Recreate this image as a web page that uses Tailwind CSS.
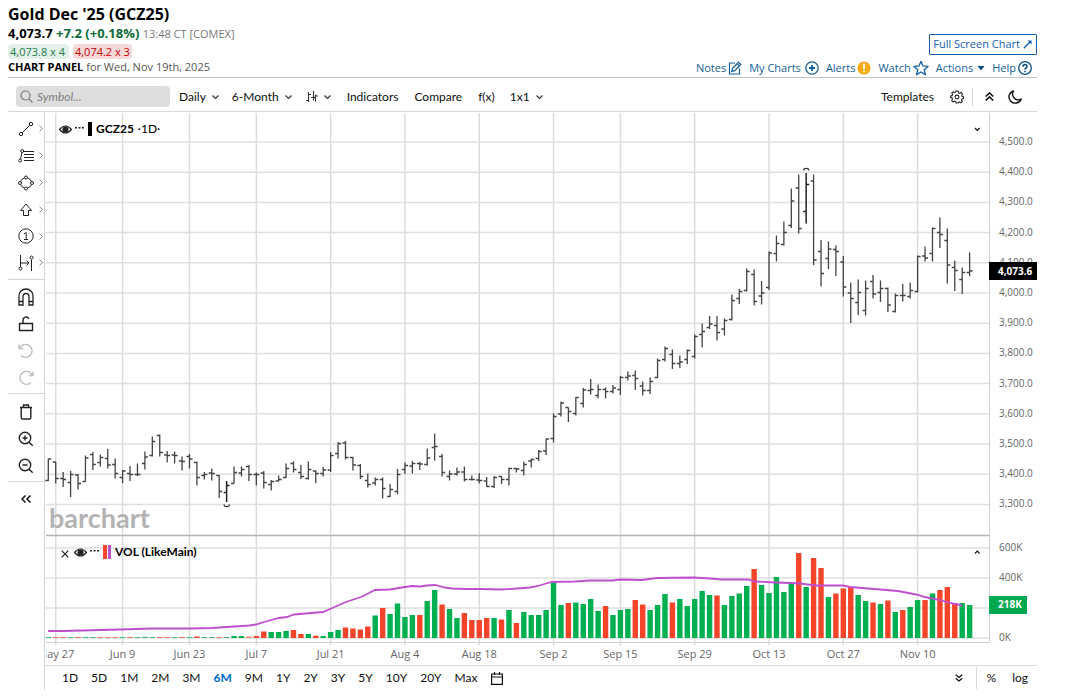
<!DOCTYPE html>
<html lang="en">
<head>
    <meta charset="UTF-8">
    <meta name="viewport" content="width=device-width, initial-scale=1.0">
    <title>Gold Dec '25 (GCZ25) - Interactive Chart</title>
    <script src="https://cdn.jsdelivr.net/npm/@tailwindcss/browser@4"></script>
</head>
<body class="bg-white text-black font-['Open_Sans',sans-serif]">
    <div class="pl-2 pr-[41px]">
        <!-- Header -->
        <header class="flex justify-between border-b border-[#c4c4c4] h-[78px]">
            <div class="pt-1">
                <h1 class="text-[16px] leading-[20px] font-bold">Gold Dec '25 (GCZ25)</h1>
                <p class="text-[13px] leading-[18px] font-bold">4,073.7 <span class="text-[#0d6b3c]">+7.2 (+0.18%)</span> <span class="text-[11px] font-normal text-[#777]">13:48 CT [COMEX]</span></p>
                <p class="flex gap-1 text-[11px] leading-[15px] mt-px">
                    <span class="bg-[#e3f0ea] text-[#1e7b4b] rounded-sm pl-0.5 pr-1">4,073.8 x 4</span>
                    <span class="bg-[#f6dada] text-[#c40000] rounded-sm px-0.5">4,074.2 x 3</span>
                </p>
                <p class="text-[11px] leading-[16px] text-[#555]"><b class="text-black">CHART PANEL</b> for Wed, Nov 19th, 2025</p>
            </div>
            <div class="flex flex-col items-end pt-[34px] text-[11px] text-[#145f99]">
                <button class="flex items-center gap-0.5 h-[21px] border border-[#1560b0] px-[3px] rounded-[1px] text-[#1560b0]">Full Screen Chart
                    <svg class="w-[11px] h-[11px]" viewBox="0 0 12 12" fill="none" stroke="currentColor" stroke-width="1.6"><path d="M2 10 9 3"/><path d="M6 1.500h4.500v4.500z" fill="currentColor" stroke="none"/></svg>
                </button>
                <nav class="flex items-center gap-[7px] h-[26px] shrink-0 -mb-1 pr-[5px]">
                    <a href="#" class="flex items-center gap-0.5">Notes
                        <svg class="w-[14px] h-[14px]" viewBox="0 0 14 14" fill="none" stroke="currentColor" stroke-width="1.2"><path d="M7 2H1.500v11h10V7.500M4.500 7.500l6-6.300 2.300 2.200-6 6.200-3 .9zM9.200 2.800l2.200 2.100"/></svg></a>
                    <a href="#" class="flex items-center gap-1">My Charts
                        <svg class="w-[14px] h-[14px]" viewBox="0 0 14 14" fill="none" stroke="currentColor" stroke-width="1.300"><circle cx="7" cy="7" r="6.200"/><path d="M7 4v6M4 7h6" stroke-width="1.800"/></svg></a>
                    <a href="#" class="flex items-center gap-0.5">Alerts
                        <svg class="w-[14px] h-[14px]" viewBox="0 0 14 14"><circle cx="7" cy="7" r="6.600" fill="#fbab18"/><path d="M7 2.500v5.800M7 9.600v2" stroke="#fff" stroke-width="1.700"/></svg></a>
                    <a href="#" class="flex items-center gap-0.5">Watch
                        <svg class="w-4 h-4" viewBox="0 0 16 16" fill="none" stroke="currentColor" stroke-width="1.300" stroke-linejoin="round"><path d="M8 1.300l2 4.600 5 .5-3.800 3.300 1.200 4.900L8 12l-4.400 2.600 1.200-4.900L1 6.400l5-.5z"/></svg></a>
                    <button class="flex items-center gap-1">Actions
                        <svg class="w-2 h-2" viewBox="0 0 8 8"><path d="M.5 2h7L4 6.500z" fill="#0b4f86"/></svg></button>
                    <a href="#" class="flex items-center gap-0.5">Help
                        <svg class="w-[14px] h-[14px]" viewBox="0 0 14 14" fill="none" stroke="#0b4f86" stroke-width="1.300"><circle cx="7" cy="7" r="6.300"/><path d="M5 5.700C5 3 9 3 9 5.500 9 7 7 7 7 8.600M7 9.800v1.500" stroke-width="1.600"/></svg></a>
                </nav>
            </div>
        </header>

        <!-- Top toolbar -->
        <div class="flex items-center h-[34px] pt-1 pl-2 border-b border-[#d9d9d9] font-['Lato',sans-serif] text-[12px] text-[#111]">
            <label class="flex items-center gap-1 w-[154px] h-[21px] mr-[9px] pl-1 rounded bg-[#dedede]">
                <svg class="w-[13px] h-[13px] shrink-0" viewBox="0 0 13 13" fill="none" stroke="#777" stroke-width="1.200"><circle cx="5.500" cy="5.500" r="4.500"/><path d="M8.800 8.800 12.500 12.500"/></svg>
                <input type="text" aria-label="Symbol" placeholder="Symbol..." class="w-full min-w-0 bg-transparent italic outline-none placeholder:text-[#808080]">
            </label>
            <button class="flex items-center gap-1.5 mr-[13px]">Daily <svg class="w-[7px] h-[7px]" viewBox="0 0 7 7" fill="none" stroke="#333" stroke-width="1.200"><path d="M.5 2.500l3 3 3-3"/></svg></button>
            <button class="flex items-center gap-1.5 mr-[13px]">6-Month <svg class="w-[7px] h-[7px]" viewBox="0 0 7 7" fill="none" stroke="#333" stroke-width="1.200"><path d="M.5 2.500l3 3 3-3"/></svg></button>
            <button aria-label="Bar type" class="flex items-center gap-1.5 mr-4"><svg class="w-[13px] h-3" viewBox="0 0 13 12" fill="none" stroke="#333" stroke-width="1.100"><path d="M3.500 1v10M1 9.500h2.500M3.500 3.500H6M8.500 0v9.500M6 6.500h5M10.500 3.500v7M10.500 5H13"/></svg> <svg class="w-[7px] h-[7px]" viewBox="0 0 7 7" fill="none" stroke="#333" stroke-width="1.200"><path d="M.5 2.500l3 3 3-3"/></svg></button>
            <button class="mr-4">Indicators</button>
            <button class="mr-4">Compare</button>
            <button class="mr-[15px]">f(x)</button>
            <button class="flex items-center gap-1.5">1x1 <svg class="w-[7px] h-[7px]" viewBox="0 0 7 7" fill="none" stroke="#333" stroke-width="1.200"><path d="M.5 2.500l3 3 3-3"/></svg></button>
            <button class="ml-auto mr-4">Templates</button>
            <button aria-label="Settings"><svg class="w-[14px] h-[14px]" viewBox="0 0 14 14" fill="none" stroke="#222" stroke-width="1.100" stroke-linejoin="round"><path d="M5.900 1h2.200l.4 1.700 1.100.5 1.500-.9 1.500 1.500-.9 1.500.5 1.100 1.300.3v1.700l-1.500.5-.5 1.100.9 1.500-1.500 1.300-1.500-.7-1.100.5L7.900 13H6.100l-.5-1.400-1.100-.5-1.500.8-1.300-1.400.8-1.500L2 7.900.6 7.500V6l1.500-.4.5-1.100-.8-1.500 1.400-1.200 1.300.8 1.100-.5z"/><circle cx="7" cy="7" r="1.900"/></svg></button>
            <span class="h-[18px] border-l border-[#d4d4d4] ml-2 mr-3"></span>
            <button aria-label="Collapse" class="mr-[14px]"><svg class="w-[9px] h-[9px]" viewBox="0 0 9 9" fill="none" stroke="#111" stroke-width="1.500"><path d="M.7 4.500 4.500.9l3.800 3.600M.7 8.500l3.800-3.600 3.800 3.600"/></svg></button>
            <button aria-label="Dark mode" class="mr-[15px]"><svg class="w-[14px] h-[14px]" viewBox="0 0 14 14" fill="none" stroke="#111" stroke-width="1.400" stroke-linejoin="round"><path d="M5.500.8A6.300 6.300 0 1 0 13.200 9 5.800 5.800 0 0 1 5.500.8z"/></svg></button>
        </div>

        <div class="flex">
            <!-- Drawing tools -->
            <aside class="w-[37px] shrink-0 border-r border-[#d4d4d4] text-[#222]">
                <div class="flex flex-col pt-[3px] pb-[3px] border-b border-[#d4d4d4]">
                    <button aria-label="Line" class="flex items-center h-[27px] pl-[10px] gap-[5px]"><svg class="w-4 h-4" viewBox="0 0 16 16" fill="none" stroke="currentColor"><circle cx="3" cy="13" r="1.700"/><circle cx="13" cy="3" r="1.700"/><path d="M4.200 11.800l7.600-7.600"/></svg><svg class="w-1 h-[7px]" viewBox="0 0 4 7" fill="none" stroke="#888"><path d="M.5.5l3 3-3 3"/></svg></button>
                    <button aria-label="Fibonacci" class="flex items-center h-[27px] pl-[10px] gap-[5px]"><svg class="w-4 h-4" viewBox="0 0 16 16" fill="none" stroke="currentColor"><circle cx="2.200" cy="12.500" r="1.500"/><circle cx="4.200" cy="3" r="1.500"/><path d="M2.500 11 4 4.500M5.700 3.500H16M6 6.500h10M6 9.500h10M6 12.500h10"/></svg><svg class="w-1 h-[7px]" viewBox="0 0 4 7" fill="none" stroke="#888"><path d="M.5.5l3 3-3 3"/></svg></button>
                    <button aria-label="Shapes" class="flex items-center h-[27px] pl-[10px] gap-[5px]"><svg class="w-4 h-4" viewBox="0 0 16 16" fill="none" stroke="currentColor"><circle cx="8" cy="2.500" r="1.500"/><circle cx="8" cy="13.500" r="1.500"/><circle cx="2" cy="8" r="1.500"/><circle cx="14" cy="8" r="1.500"/><path d="M6.500 2.800Q3.500 3.800 2.600 6.600M9.500 2.800q3 1 3.900 3.800M2.600 9.400q.9 2.800 3.900 3.800M13.400 9.400q-.9 2.800-3.900 3.800"/></svg><svg class="w-1 h-[7px]" viewBox="0 0 4 7" fill="none" stroke="#888"><path d="M.5.5l3 3-3 3"/></svg></button>
                    <button aria-label="Arrow" class="flex items-center h-[27px] pl-[10px] gap-[5px]"><svg class="w-4 h-4" viewBox="0 0 16 16" fill="none" stroke="currentColor"><path d="M8 2 13.500 8.500h-3v5h-5v-5h-3z"/></svg><svg class="w-1 h-[7px]" viewBox="0 0 4 7" fill="none" stroke="#888"><path d="M.5.5l3 3-3 3"/></svg></button>
                    <button aria-label="Counter" class="flex items-center h-[26px] pl-[10px] gap-[5px]"><svg class="w-4 h-4" viewBox="0 0 16 16" fill="none" stroke="currentColor"><circle cx="8" cy="8" r="7.200"/><path d="M5.800 6 8.200 4.500v7M6 11.500h4.200"/></svg><svg class="w-1 h-[7px]" viewBox="0 0 4 7" fill="none" stroke="#888"><path d="M.5.5l3 3-3 3"/></svg></button>
                    <button aria-label="Measure" class="flex items-center h-[27px] pl-[10px] gap-[5px]"><svg class="w-4 h-4" viewBox="0 0 16 16" fill="none" stroke="currentColor"><path d="M2.500 0v12M13.500 4.500v11.500M3 8h8M8.500 5.500 11 8l-2.500 2.500"/><circle cx="2.500" cy="13.500" r="1.500"/><circle cx="13.500" cy="2.500" r="1.500"/></svg><svg class="w-1 h-[7px]" viewBox="0 0 4 7" fill="none" stroke="#888"><path d="M.5.5l3 3-3 3"/></svg></button>
                </div>
                <div class="flex flex-col pt-[3px] pb-0.5 border-b border-[#d4d4d4]">
                    <button aria-label="Magnet" class="h-[27px] pl-[10px]"><svg class="w-4 h-[18px]" viewBox="0 0 16 18" fill="none" stroke="currentColor" stroke-width="1.300"><path d="M1 17V8a7 7 0 0 1 14 0v9h-4V8.500a3 3 0 0 0-6 0V17zM1 13.500h4M11 13.500h4"/></svg></button>
                    <button aria-label="Unlock" class="h-[27px] pl-[10px]"><svg class="w-4 h-4" viewBox="0 0 16 16" fill="none" stroke="currentColor" stroke-width="1.400"><path d="M1.500 7.500h13v7h-13zM5 7.500V4a3 3 0 0 1 5.800-1"/></svg></button>
                    <button aria-label="Undo" class="h-[27px] pl-[10px] text-[#bbb]"><svg class="w-4 h-4" viewBox="0 0 16 16" fill="none" stroke="currentColor" stroke-width="1.300"><path d="M1 1.500v4h4M1.500 5.300A6.500 6.500 0 1 1 3 12.500"/></svg></button>
                    <button aria-label="Redo" class="h-[27px] pl-[10px] text-[#bbb]"><svg class="w-4 h-4" viewBox="0 0 16 16" fill="none" stroke="currentColor" stroke-width="1.300"><path d="M15 1.500v4h-4M14.500 5.300A6.500 6.500 0 1 0 13 12.500"/></svg></button>
                </div>
                <div class="flex flex-col pt-1 pb-0.5 border-b border-[#d4d4d4]">
                    <button aria-label="Delete" class="h-[27px] pl-[10px]"><svg class="w-4 h-4" viewBox="0 0 16 16" fill="none" stroke="currentColor" stroke-width="1.400"><path d="M2 3.500h12M5.500 3V1h5v2M3.200 3.500v10.200q0 1.300 1.300 1.300h7q1.300 0 1.300-1.300V3.500"/></svg></button>
                    <button aria-label="Zoom in" class="h-[27px] pl-[10px]"><svg class="w-4 h-4" viewBox="0 0 16 16" fill="none" stroke="currentColor" stroke-width="1.400"><circle cx="7" cy="7" r="5.700"/><path d="M11.200 11.200l3.500 3.500M7 4.500v5M4.500 7h5"/></svg></button>
                    <button aria-label="Zoom out" class="h-[27px] pl-[10px]"><svg class="w-4 h-4" viewBox="0 0 16 16" fill="none" stroke="currentColor" stroke-width="1.400"><circle cx="7" cy="7" r="5.700"/><path d="M11.200 11.200l3.500 3.500M4.500 7h5"/></svg></button>
                </div>
                <button aria-label="Hide tools" class="h-[27px] pl-[13px] mt-[3px]"><svg class="w-[10px] h-2" viewBox="0 0 10 8" fill="none" stroke="#111" stroke-width="1.500"><path d="M4.500.5 1 4l3.500 3.500M9.500.5 6 4l3.500 3.500"/></svg></button>
            </aside>

            <main class="flex-1 min-w-0">
                <div class="relative">
                    <svg id="chart" class="block w-full" viewBox="45 112 992 553" font-family="'Open Sans', sans-serif" font-size="10"></svg>

                    <!-- Price legend -->
                    <div class="absolute left-[14px] top-[9px] flex items-center font-['Lato',sans-serif] text-[12px] leading-4">
                        <svg class="w-[13px] h-[9px]" viewBox="0 0 13 9" fill="none" stroke="#222" stroke-width="1.200"><path d="M.5 4.500Q6.500-2.500 12.500 4.500 6.500 11.500.5 4.500z"/><circle cx="6.500" cy="4.500" r="2.500" fill="#222"/></svg>
                        <svg class="w-[9px] h-[5px] ml-[3px] mb-1" viewBox="0 0 9 5" fill="#222"><path d="M0 2h2v1.500H0zM3.500 2h2v1.500h-2zM7 2h2v1.500H7z"/></svg>
                        <span class="w-1 h-[14px] ml-1 mr-1 bg-black"></span>
                        <b>GCZ25</b><span class="ml-1">·1D·</span>
                    </div>
                    <!-- Volume legend -->
                    <div class="absolute left-[16px] top-[432px] flex items-center font-['Lato',sans-serif] text-[12px] leading-4">
                        <svg class="w-2 h-2 mt-1" viewBox="0 0 8 8" fill="none" stroke="#222" stroke-width="1.200"><path d="M.7.7l6.600 6.600M7.300.7.7 7.300"/></svg>
                        <svg class="w-[13px] h-[9px] ml-[5px]" viewBox="0 0 13 9" fill="none" stroke="#222" stroke-width="1.200"><path d="M.5 4.500Q6.500-2.500 12.500 4.500 6.500 11.500.5 4.500z"/><circle cx="6.500" cy="4.500" r="2.500" fill="#222"/></svg>
                        <svg class="w-[9px] h-[5px] ml-[3px] mb-1" viewBox="0 0 9 5" fill="#222"><path d="M0 2h2v1.500H0zM3.500 2h2v1.500h-2zM7 2h2v1.500H7z"/></svg>
                        <span class="w-1 h-[14px] ml-1 bg-[#f4452b]"></span><span class="w-[3px] h-[14px] ml-px mr-1 bg-[#c04fd0]"></span>
                        <b>VOL (LikeMain)</b>
                    </div>
                </div>

                <!-- Range toolbar -->
                <div class="flex items-center h-[25px] border-t border-[#d9d9d9] pl-[17px] font-['Lato',sans-serif] text-[12px] text-[#111]">
                    <div class="flex gap-[13px]">
                        <button>1D</button><button>5D</button><button>1M</button><button>2M</button><button>3M</button>
                        <button class="font-bold text-[#006ac1]">6M</button><button>9M</button><button>1Y</button><button>2Y</button>
                        <button>3Y</button><button>5Y</button><button>10Y</button><button>20Y</button><button>Max</button>
                        <button aria-label="Pick dates"><svg class="w-3 h-[13px]" viewBox="0 0 12 13" fill="none" stroke="#111" stroke-width="1.200"><path d="M.6 2h10.800v10.400H.6zM.6 5h10.800M3.500 0v3M8.500 0v3"/></svg></button>
                    </div>
                    <button aria-label="Expand" class="ml-auto mr-[13px]"><svg class="w-2 h-2" viewBox="0 0 8 8" fill="none" stroke="#111" stroke-width="1.200"><path d="M.7.7 4 3.500 7.300.7M.7 4.200 4 7l3.300-2.800"/></svg></button>
                    <span class="h-[22px] border-l border-[#d9d9d9] mr-[10px]"></span>
                    <button class="mr-4">%</button>
                    <button class="mr-[9px]">log</button>
                </div>
            </main>
        </div>
    </div>

    <script>
        const X0 = 48.3, STEP = 7.43, VOL_BASE = 638;

        // open, high, low, close in chart units
        const bars = [
            [480.5,458.5,481,459],[462,462,483.5,478.5],[478.5,472,487,479.5],[482.5,471,497,474.5],[475,474,489.5,483.5],
            [481.5,455.5,481.5,458],[454.5,452,470,464.5],[462.5,454.5,466.5,457.5],[458.5,449,468.5,465],[464.5,458.5,478.5,473.5],
            [477.5,470,483,471],[473.5,466,481,474.5],[474.5,463.5,476,474.5],[463.5,451.5,469.5,457],[455.5,436.5,456.5,441.5],
            [435.5,434.5,456.5,452.5],[455,451,462.5,455.5],[455,451.5,463.5,455.5],[461,456.5,470.5,461.5],[456.5,454,468.5,459],
            [462.5,461.5,485.5,477.5],[475.5,472,479.5,474.5],[473,468.5,480.5,473.5],[475.5,475,498,491.5],[492.5,481,502,485.5],
            [483.5,466.5,483.5,472.5],[473,466.5,476.5,469.5],[466.5,465,481,474.5],[474.5,472.5,485.5,474.5],[473,471,488.5,482.5],
            [484.5,480,490.5,481.5],[481,475.5,481.5,479.5],[477.5,463.5,478,468.5],[463.5,461.5,472.5,469.5],[472.5,465,479,476.5],
            [478.5,461.5,479.5,469.5],[471,470.5,483,473.5],[473.5,467,476.5,470],[470,452,472,455.5],[453.5,442,458.5,443.5],
            [443,441,459.5,457.5],[457.5,457,470.5,465],[465.5,464,479,476.5],[480.5,473.5,487.5,484.5],[483,477.5,485.5,479.5],
            [479.5,477.5,498.5,488.5],[496.5,484,497,489.5],[491.5,469,494.5,474.5],[469.5,462.5,474,465.5],[466,461,473.5,463.5],
            [463.5,462,470,464],[464.5,448.5,465.5,458],[447.5,433.5,460.5,446.5],[456.5,454,476.5,472.5],[476.5,470.5,480.5,474],
            [474,467.5,475.5,472],[472,466.5,481.5,479.5],[479.5,475.5,480.5,479.5],[480,473,483.5,480.5],[481,477,487,486.5],
            [486.5,476,488,477.5],[476.5,476,484,479.5],[479.5,467.5,485.5,468.5],[468.5,468,472.5,469],[470.5,461.5,475.5,464.5],
            [461,458.5,467.5,459.5],[458.5,450,461,451.5],[451,438.5,455,439],[438.5,413.5,442.5,416.5],[414,401.5,416.5,403],
            [407.5,407.5,422,411.5],[413.5,397,415.5,397.5],[403.5,388,407.5,390],[390.5,379,394.5,389.5],[395.5,384.5,398.5,389.5],
            [389.5,387.5,398.5,391.5],[391.5,385,393.5,388],[389.5,376,395,377.5],[377.5,371.5,380.5,376],[375.5,370.5,390,378.5],
            [386,381.5,395.5,390.5],[390.5,377.5,394,381.5],[377.5,358.5,378,360.5],[359.5,346.5,361.5,348.5],[354.5,349.5,369,363.5],
            [363.5,355.5,368,362],[359.5,349.5,364,350.5],[356.5,334.5,358.5,336.5],[334.5,323.5,347.5,331.5],[327.5,316,329,324],
            [325.5,316,340.5,332.5],[329,318.5,335.5,320.5],[319.5,294.5,320.5,300.5],[298.5,289,304,291.5],[290.5,268.5,291.5,271.5],
            [274.5,269.5,305.5,301.5],[296,281,304.5,293],[287.5,251.5,290,253],[253.5,235.5,261.5,243.5],[244.5,221.5,245.5,232.5],
            [225.5,188.5,228,201],[188,174.5,233.5,228.5],[211.5,173,223.5,184.5],[181,174.5,265,260],[251.5,240,286.5,273.5],
            [258.5,241.5,269,249],[249.5,245.5,276,251.5],[262,256,296.5,287],[293,282.5,323,298.5],[302.5,279.5,315,292.5],
            [310.5,280.5,315.5,288.5],[281.5,275,298.5,294],[292.5,280.5,302,288.5],[288.5,287.5,312,305],[311.5,293.5,312.5,295.5],
            [295.5,284,301.5,295.5],[296.5,282.5,298.5,290.5],[291.5,255.5,292.5,256.5],[256,246.5,261.5,258],[253.5,227.5,261.5,228.5],
            [232.5,217.5,248,234.5],[240.5,228.5,283.5,265],[267.5,260.5,291,270.5],[279.5,267.5,294,272.5],[272.5,252.5,276,271]
        ];

        // volume bar heights, r = down day, g = up day
        const volume = `g1 r1 r1 g1 r1 g1 g1 r1 r1 r1 g1 r1 g1 g1.3 g1 r1 r1 g1 r1 g1 r1.5 g1 g1 r1 g1 g2 g2 r1.300 r2 r6.5 g6 g6 g7 r8 r4 g4 r2.3 g2 g6 g8
            r10.5 r9.5 r8.5 r11.5 g22.5 r30 g24 g34.5 g21 g23 r23 g37 g48 r33.5 g29 g20 r25 r18 r18 r20 g20 r18.5 g28 r15 g26 g23 g23 g28 g56 g33
            r35 g35.5 g34 g39 g27 r32 g23 g28 g29 r38 r33.5 g28 g33 g44 r35.5 g39 g32 g39 g47 g43 r42.5 g33 g42 g44.5 g52 r69 g53 g45 g61 g46
            g55 r85 g51 r80 r70 g41 r44.5 r49.5 r51 g43 g37 r35.5 g34 r37.5 g26 r28 g31 g38 r38 g44.5 r48 r51 r35 g35 g33`.trim().split(/\s+/);

        const average = '48,631 63,631 120,629.5 152,628.5 190,628.5 212,628 227,627 249,625.5 256,624.5 264,622 279,618 287,617 294,614.5 323,612 330,609 346,602 361,597 368,593.5 375,590 390,589.5 405,587 412,586 420,586.5 427,585.5 435,585 445,587.5 452,588.5 465,589 480,589 502,589.5 517,588.5 530,587.5 538,586 546,583.5 552,582 575,581.5 590,580.5 613,580.5 620,579.5 642,580 657,578 694,577.5 710,578.5 722,579.5 748,579.5 755,581.5 775,582.5 791,583 800,583.5 816,585.5 843,585.5 850,587 880,589.5 898,591 916,594.5 925,597 940,600 950,603 962,605.5';

        const dates = [['May 27', 1], ['Jun 9', 10], ['Jun 23', 19], ['Jul 7', 28], ['Jul 21', 38], ['Aug 4', 48], ['Aug 18', 58],
            ['Sep 2', 68], ['Sep 15', 77], ['Sep 29', 87], ['Oct 13', 97], ['Oct 27', 107], ['Nov 10', 117]];

        const x = i => X0 + i * STEP;
        let out = '<defs><clipPath id="plot"><rect x="46" y="112" width="944" height="560"/></clipPath></defs>';

        // grid and axes
        dates.forEach(([label, i]) => {
            out += `<path d="M${x(i)} 113V645.500" stroke="#dcdcdc" stroke-width="1.500"/>`;
            out += `<text x="${x(i)}" y="658" font-size="11" text-anchor="middle" fill="#666" clip-path="url(#plot)">${label}</text>`;
        });
        for (let n = 0; n <= 12; n++) {
            const y = 142 + n * 30.2;
            const price = (4500 - n * 100).toLocaleString('en-US') + '.0';
            out += `<path d="M46 ${y}H989" stroke="#dfdfdf" stroke-width="1.500"/>`;
            out += `<text x="999" y="${y + 3}" fill="#666">${price}</text>`;
        }
        [600, 400, 200, 0].forEach((v, n) => {
            const y = 548 + n * 30;
            out += `<path d="M46 ${y}H989" stroke="#dfdfdf" stroke-width="1.500"/>`;
            if (v !== 200) out += `<text x="999" y="${y + 3}" fill="#666">${v}K</text>`;
        });
        out += '<path d="M46 642.500H989.500M989.500 113V642.500" fill="none" stroke="#d0d0d0"/>';
        out += '<path d="M46 535.500H989" stroke="#b4b4b4" stroke-width="1.500"/>';
        out += `<text x="49" y="528" font-family="Lato, sans-serif" font-size="27" font-weight="700" fill="#b3b3b3">barchart</text>`;

        // volume
        volume.forEach((v, i) => {
            const h = parseFloat(v.slice(1));
            out += `<rect x="${x(i) - 2.7}" y="${VOL_BASE - h}" width="5.400" height="${h}" fill="${v[0] === 'g' ? '#00b050' : '#f4452b'}" opacity="${h < 1.4 ? 0.7 : 1}"/>`;
        });
        out += `<polyline points="${average}" fill="none" stroke="#c04fd0" stroke-width="1.800"/>`;

        // price bars
        bars.forEach(([o, h, l, c], i) => {
            const bold = i === 24 || i === 102;
            out += `<path d="M${x(i)} ${h}V${l}M${x(i) - 3} ${o}H${x(i)}M${x(i)} ${c}H${x(i) + 3}" stroke="${bold ? '#222' : '#444'}" stroke-width="${bold ? 1.5 : 1.3}"/>`;
        });
        out += '<path d="M803.500 170.500q0-2.200 2.700-2.200t2.700 2.200M224 504.500q0 2.200 2.700 2.200t2.700-2.200" fill="none" stroke="#333" stroke-width="1.200"/>';

        // last value flags and pane toggles
        out += '<rect x="989" y="262" width="48" height="18"/><text x="998" y="275" fill="#fff" font-weight="700">4,073.6</text>';
        out += '<rect x="989" y="596" width="38" height="18" fill="#00a94f"/><text x="998" y="608" fill="#fff" font-weight="700">218K</text>';
        out += '<path d="M975 128l2.300 2.300 2.300-2.300M975 553.500l2.300-2.300 2.300 2.300" fill="none" stroke="#111" stroke-width="1.200"/>';
        document.getElementById('chart').innerHTML = out;
    </script>
</body>
</html>
